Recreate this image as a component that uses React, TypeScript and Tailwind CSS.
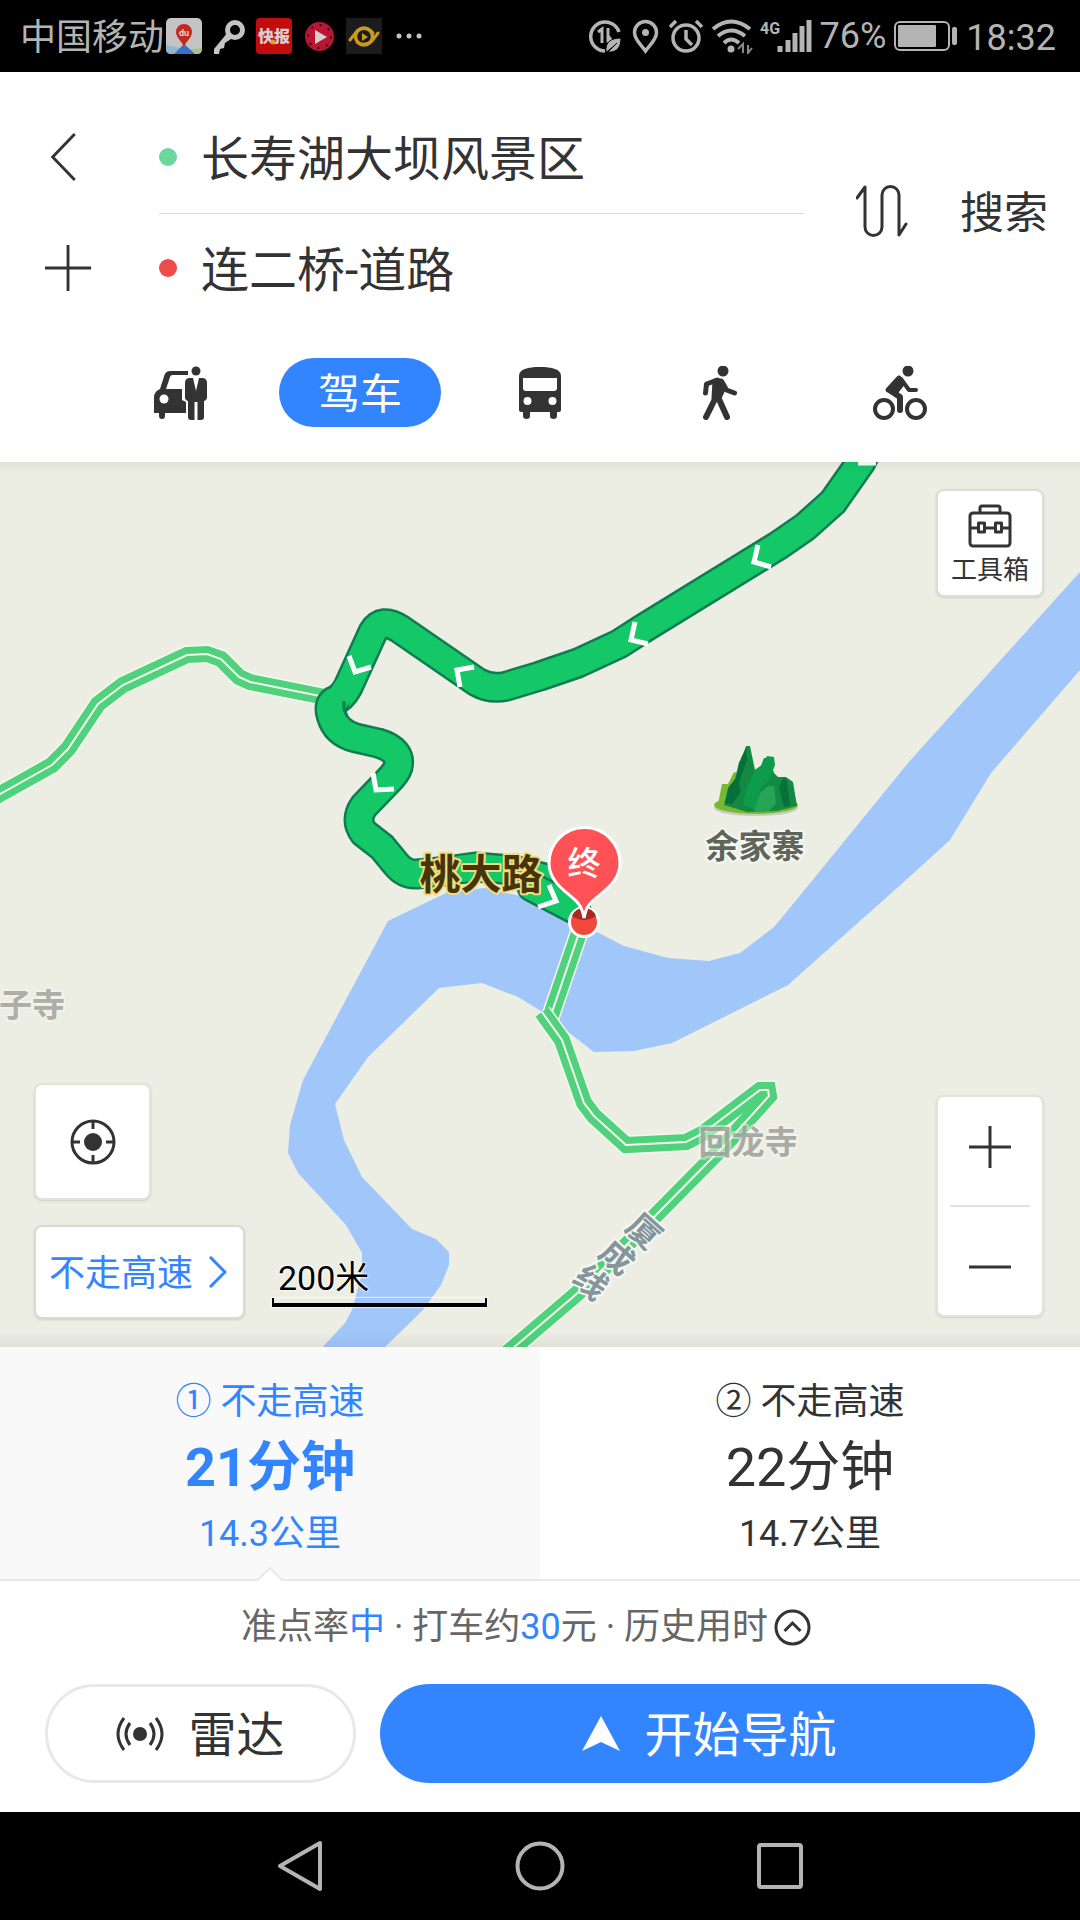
import React, { useState } from 'react';
import clsx from 'clsx';

type Mode = 'taxi' | 'drive' | 'bus' | 'walk' | 'bike';

const routes = [
  { id: 1, mark: '①', name: '不走高速', time: '21分钟', distance: '14.3公里' },
  { id: 2, mark: '②', name: '不走高速', time: '22分钟', distance: '14.7公里' },
];

const TaxiIcon = () => (
  <svg width="54" height="54" viewBox="0 0 54 54" fill="#333">
    <path d="M35 5H17q-4 0-5.500 4L7 23q-5 2-6 7v17h5v3q0 3 3 3t3-3v-3h21V36l-4-2V23H13l4-12q.5-2 2.500-2H35z" />
    <circle cx="11" cy="33" r="4.500" fill="#fff" />
    <circle cx="43" cy="5" r="4.500" />
    <path d="M37 12h3l3 13 3-13h3q5 0 5 5v14q0 3-3 4v16q0 3-3 3h-3.500V36h-3v18H38q-3 0-3-3V35q-3-1-3-4V17q0-5 5-5z" />
  </svg>
);

const BusIcon = () => (
  <svg width="44" height="54" viewBox="0 0 44 54" fill="#333">
    <path
      fillRule="evenodd"
      d="M22 1c12 0 21 2 21 9v34q0 2-2 2h-2v4q0 3-3.500 3T32 50v-4H12v4q0 3-3.500 3T5 50v-4H3q-2 0-2-2V10c0-7 9-9 21-9zM5 12v10q0 3 3 3h28q3 0 3-3V12zM9.500 31a4 4 0 100 8 4 4 0 000-8zm25 0a4 4 0 100 8 4 4 0 000-8z"
    />
  </svg>
);

const WalkIcon = () => (
  <svg width="36" height="54" viewBox="0 0 36 54" fill="none" stroke="#333" strokeWidth="5" strokeLinecap="round" strokeLinejoin="round">
    <circle cx="21" cy="5" r="5.500" fill="#333" stroke="none" />
    <path d="M13 15h6l3 6-5 11h-5z" fill="#333" />
    <path d="M3.500 27l1-9 11-4M20 16l4.500 8 8 3" />
    <path d="M14 31L4 51M16 31l9 20" strokeWidth="6" />
  </svg>
);

const BikeIcon = () => (
  <svg width="54" height="54" viewBox="0 0 54 54" fill="none" stroke="#333" strokeLinecap="round" strokeLinejoin="round">
    <circle cx="35" cy="5" r="5.500" fill="#333" stroke="none" />
    <circle cx="11" cy="43" r="9" strokeWidth="4" />
    <circle cx="43" cy="43" r="9" strokeWidth="4" />
    <path d="M26 12l-11 12 7 3 7-9z" fill="#333" strokeWidth="5" />
    <path d="M28 13l8 11h7" strokeWidth="4" />
    <path d="M18 25l9 6v13" strokeWidth="6" />
  </svg>
);

const modes: { id: Mode; label: string; icon?: React.ReactNode }[] = [
  { id: 'taxi', label: '打车', icon: <TaxiIcon /> },
  { id: 'drive', label: '驾车' },
  { id: 'bus', label: '公交', icon: <BusIcon /> },
  { id: 'walk', label: '步行', icon: <WalkIcon /> },
  { id: 'bike', label: '骑行', icon: <BikeIcon /> },
];

const StatusBar = () => (
  <div className="flex h-[72px] items-center justify-between bg-black pl-5 pr-6 text-4xl text-[#b4b4b4]">
    <div className="flex items-center">
      <span className="pt-1">中国移动</span>
      <svg className="ml-0.5" width="260" height="36" viewBox="0 0 260 36">
        <rect width="36" height="36" rx="5" fill="#c4c4c4" />
        <path d="M0 27l14 3v6H5q-5 0-5-5z" fill="#8fb8c8" />
        <path d="M36 30l-12 1 2 5h5q5 0 5-5z" fill="#a9c08a" />
        <path d="M18 26l11 10H8z" fill="#3572c8" />
        <path d="M18 29c-2-6-8-9-8-15a8 8 0 0116 0c0 6-6 9-8 15z" fill="#c4281f" />
        <text x="18" y="18" fontSize="9" fontWeight="700" fill="#ddd" textAnchor="middle">du</text>
        <circle cx="69" cy="12" r="7.500" fill="none" stroke="#c4c4c4" strokeWidth="5" />
        <path d="M62 14L48 31v5h5l1-5 4-1 1-5 9-6" fill="#c4c4c4" />
        <rect x="90" width="36" height="36" rx="4" fill="#c30d0d" />
        <text x="108" y="24" fontSize="16" fontWeight="900" fill="#d8d0d0" textAnchor="middle">快报</text>
        <circle cx="107" cy="24" r="2.500" fill="#e0a020" />
        <circle cx="153.500" cy="18.500" r="14.500" fill="#b81632" />
        <circle cx="153.500" cy="18.500" r="11.500" fill="none" stroke="#3a0812" strokeWidth="2" strokeDasharray="2 7" />
        <path d="M149 12l12 7-12 7z" fill="#d8d0d0" />
        <rect x="180" width="36" height="36" fill="#1c1c1c" />
        <path d="M184 22l7-9q7-5 14 0l2 2M212 15l-6 8q-8 6-15 1" fill="none" stroke="#c99a1c" strokeWidth="3" strokeLinecap="round" />
        <circle cx="198" cy="18.500" r="8.500" fill="none" stroke="#c99a1c" strokeWidth="3.500" />
        <path d="M196 15l6 4-6 4z" fill="#c99a1c" />
        <g fill="#c4c4c4">
          <circle cx="233" cy="18" r="2.500" />
          <circle cx="243" cy="18" r="2.500" />
          <circle cx="253" cy="18" r="2.500" />
        </g>
      </svg>
    </div>
    <div className="flex items-center">
      <svg width="232" height="36" viewBox="0 0 232 36" fill="none" stroke="#b4b4b4" strokeWidth="3.500">
        <path d="M17 33A14.500 14.500 0 1131 14" />
        <path d="M10 14l4-3v14M20 10v13h4l-4-5" strokeWidth="3" />
        <path d="M18 34c-1-10 5-14 15-14 0 9-4 15-13 14l9-9" fill="#b4b4b4" stroke="#000" strokeWidth="1" />
        <path d="M57.500 33c-4-6-11-11-11-18.500a11 11 0 0122 0c0 7.500-7 12.500-11 18.500z" />
        <circle cx="57.500" cy="14.500" r="3.500" fill="#b4b4b4" stroke="none" />
        <circle cx="98" cy="20" r="13" />
        <path d="M98 12v9l6 6M82 9l6-6M114 9l-6-6" />
        <path d="M125 11q18-15 37 0M130 18q13-11 27 0M136 25q7-7 15 0" strokeWidth="4" />
        <circle cx="143" cy="31" r="3.500" fill="#b4b4b4" stroke="none" />
        <path d="M150 31l5-5v9M160 27v8l4-5" strokeWidth="2" stroke="#888" />
        <text x="172" y="16" fontSize="16" fontWeight="700" fill="#b4b4b4" stroke="none">4G</text>
        <path d="M192 34v-6M200 34V22M207 34V15M214 34V8M221 34V2" strokeWidth="5" />
      </svg>
      <span>76%</span>
      <svg className="ml-2 mr-2" width="64" height="30" viewBox="0 0 64 30" fill="none">
        <rect x="1" y="1" width="54" height="28" rx="5" stroke="#b4b4b4" strokeWidth="2" />
        <rect x="4" y="4" width="38" height="22" rx="1" fill="#b4b4b4" />
        <rect x="58" y="6" width="5" height="18" rx="2" fill="#b4b4b4" />
      </svg>
      <span className="pt-1">18:32</span>
    </div>
  </div>
);

const SearchHeader = () => {
  const [mode, setMode] = useState<Mode>('drive');

  return (
    <header className="bg-white pt-7 text-[#333]">
      <div className="flex">
        <div className="flex w-[159px] flex-col pl-[45px]">
          <button type="button" aria-label="返回" className="flex h-[114px] w-12 items-center">
            <svg width="50" height="50" viewBox="0 0 50 50" fill="none" stroke="#333" strokeWidth="3">
              <path d="M31 1L8 25l23 24" />
            </svg>
          </button>
          <button type="button" aria-label="添加途经点" className="flex h-[108px] w-12 items-center">
            <svg width="50" height="50" viewBox="0 0 50 50" fill="none" stroke="#333" strokeWidth="3">
              <path d="M24 1v48M0 25h48" />
            </svg>
          </button>
        </div>
        <div className="flex-1">
          <label className="flex h-[114px] items-center gap-6 border-b border-[#dcdcdc]">
            <span className="size-[18px] shrink-0 rounded-full bg-[#6bd79c]" />
            <input aria-label="起点" defaultValue="长寿湖大坝风景区" className="w-full min-w-0 pb-1 text-5xl outline-none" />
          </label>
          <label className="flex h-[108px] items-center gap-6">
            <span className="size-[18px] shrink-0 rounded-full bg-[#f04b4b]" />
            <input aria-label="终点" defaultValue="连二桥-道路" className="w-full min-w-0 pb-1 text-5xl outline-none" />
          </label>
        </div>
        <div className="flex w-[276px] items-center justify-between pl-[52px] pr-8">
          <button type="button" aria-label="交换起终点">
            <svg width="52" height="54" viewBox="0 0 52 54" fill="none" stroke="#333" strokeWidth="3" strokeLinecap="round" strokeLinejoin="round">
              <path d="M1 14l8-11v40a8.500 8.500 0 0017 0V11a8.500 8.500 0 0117 0v40l7-11" />
            </svg>
          </button>
          <button type="button" className="pt-1.5 text-[44px] leading-none">搜索</button>
        </div>
      </div>
      <nav className="grid grid-cols-5 px-[90px] pb-[35px] pt-9">
        {modes.map((m) => (
          <button
            key={m.id}
            type="button"
            aria-label={m.label}
            onClick={() => setMode(m.id)}
            className={clsx(
              'mx-auto flex h-[69px] w-[162px] items-center justify-center rounded-full text-[42px] leading-none',
              mode === m.id && 'bg-[#3385ff] text-white'
            )}
          >
            {m.icon ?? <span className="pt-1">{m.label}</span>}
          </button>
        ))}
      </nav>
    </header>
  );
};

// two lanes on a white bed, with a thin white line between them
const Road = ({ d }: { d: string }) => (
  <g fill="none" strokeLinejoin="miter">
    <path d={d} stroke="#f4f8ef" strokeWidth="19" />
    <path d={d} stroke="#50d27d" strokeWidth="16" />
    <path d={d} stroke="#f4f8ef" strokeWidth="2" />
  </g>
);

const RouteLine = ({ d }: { d: string }) => (
  <g fill="none" strokeLinejoin="round" strokeLinecap="round">
    <path d={d} stroke="#0f7b50" strokeWidth="31" />
    <path d={d} stroke="#14c868" strokeWidth="26" />
  </g>
);

const MapCanvas = () => (
  <svg
    className="absolute inset-0 h-full w-full"
    viewBox="0 462 1080 885"
    preserveAspectRatio="xMidYMid slice"
    role="img"
    aria-label="路线地图"
  >
    <rect y="462" width="1080" height="885" fill="#eceee4" />
    <path
      fill="#a1c6f9"
      d="M1080 572L908 763L798 898L774 927L740 953L709 961L668 958L624 946L597 932L560 905L484 888L446 893L388 921L303 1080L290 1125L288 1153L298 1173L346 1225L362 1253V1273L352 1310L345 1323L320 1350H382L423 1310L441 1285L449 1265V1252L436 1239L412 1229L362 1177L344 1140L335 1104L368 1057L439 988L482 983L518 997L541 1011L572 1035L594 1052L634 1051L672 1043L788 985L906 880L950 840L991 773L1080 670Z"
    />
    <Road d="M-5 797L52 765L68 749L98 704L123 685L187 655L207 654L221 659L239 677L250 682L325 697" />
    <Road d="M580 930L550 1018" />
    <Road d="M542 1012L562 1040L584 1103L594 1116L626 1145L686 1142L702 1134L760 1090L768 1090L769 1096L722 1148L656 1215L590 1282L573 1297L505 1355" />

    <RouteLine d="M866 452L861 462L833 502L805 527L779 545L644 628L619 644L578 663L540 676L507 686Q491 690 477 682L400 629Q382 617 373 632L348 687Q342 698 334 701" />
    <RouteLine d="M334 701Q328 705 331 715Q336 733 356 738L378 743Q402 750 398 767Q396 773 388 781L364 806Q354 820 364 833L382 847L396 864Q405 875 417 874L439 872L475 867L514 870L560 882" />
    <RouteLine d="M532 887L576 910" />
    <path d="M336 702L345 688" fill="none" stroke="#14c868" strokeWidth="23" strokeLinecap="round" />
    <path d="M344 701v8l3 7" fill="none" stroke="#0f7b50" strokeWidth="3" />

    <g fill="none" stroke="#fff" strokeWidth="5">
      <path d="M858 463l18 0" />
      <path d="M758 545l-4 17 17 5" />
      <path d="M635 622l-4 18 17 4" />
      <path d="M474 667l-17 3 3 17" />
      <path d="M349 656l6 16 16-5" />
      <path d="M373 773l3 17 18-1" />
      <path d="M549 885l7 16-18 6" />
    </g>

    {/* 余家寨 */}
    <g>
      <ellipse cx="756" cy="808" rx="42" ry="8" fill="#c9cbbf" />
      <ellipse cx="756" cy="805" rx="42" ry="9" fill="#79b832" />
      <path d="M718 804l4-20h6l6-12 8 2v34z" fill="#79b832" />
      <path d="M724 805l4-17 7-9 4-17 3-4 4-12h4l5 24 6-4 3-8h5l5 15 4 4h8l7 5 4 24-20 5-30 1z" fill="#138a42" />
      <path d="M746 748l1 12-8 22 2 10-9 12-7-1 4-16 7-9 5-20z" fill="#05703a" />
      <path d="M755 770l-8 17-4 17 12 6 5-20 9-10 6-15-1-8-7-1-4 8z" fill="#0c9c4b" />
      <path d="M768 786l-8 7-6 18h15l7-8-2-17z" fill="#28a456" />
      <path d="M784 777l-5 10 5 20 6-2-3-24z" fill="#0a6f38" />
    </g>

    <g fontWeight="700" fontSize="33" textAnchor="middle" stroke="#f6f7f0" strokeWidth="4" strokeLinejoin="round" paintOrder="stroke">
      <text x="755" y="858" fill="#5f655a">余家寨</text>
      <g fill="#9c9e98" strokeOpacity=".5">
        <text x="748" y="1154" fillOpacity=".85">回龙寺</text>
        <text x="32" y="1017" fill="#acaea7">子寺</text>
      </g>
      <g fill="#84969b">
        <text x="0" y="12" transform="translate(644 1231) rotate(42)">厦</text>
        <text x="0" y="12" transform="translate(617 1257) rotate(42)">成</text>
        <text x="0" y="12" transform="translate(591 1282) rotate(42)">线</text>
      </g>
    </g>
    <text x="481" y="889" fontSize="41" fontWeight="700" textAnchor="middle" fill="#46340a" stroke="#f3dc7c" strokeWidth="4" strokeLinejoin="round" paintOrder="stroke">
      桃大路
    </text>

    <circle cx="584" cy="922" r="14.500" fill="#f2483b" stroke="#fff" strokeWidth="3" />
    <path d="M572 916a13 13 0 0124 0q-12 8-24 0z" fill="#a62a22" />
    <path d="M584 918q-2-13-10-19c-10-9-25-18-25-36a35.500 35.500 0 0171 0c0 18-15 27-25 36q-9 6-11 19z" fill="#ff5156" stroke="#fff" strokeWidth="3" />
    <text x="584" y="875" fontSize="33" fontWeight="500" textAnchor="middle" fill="#fff">终</text>
  </svg>
);

const MapControls = () => (
  <div className="absolute inset-0 flex items-end justify-between pl-[34px] pr-9 text-[#333]">
    <div className="flex items-end gap-[27px] pb-7">
      <div className="flex flex-col gap-[25px]">
        <button type="button" aria-label="定位" className="flex size-[117px] items-center justify-center rounded-lg border-2 border-[#e2e3dc] bg-white shadow-sm">
          <svg width="46" height="46" viewBox="0 0 46 46" fill="none" stroke="#333" strokeWidth="3">
            <circle cx="23" cy="23" r="21" />
            <circle cx="23" cy="23" r="9" fill="#333" stroke="none" />
            <path d="M23 2v8M23 36v8M2 23h8M36 23h8" />
          </svg>
        </button>
        <button type="button" className="flex h-[94px] w-[211px] items-center gap-4 whitespace-nowrap rounded-lg border-2 border-[#d9dad3] bg-white pl-[13px] text-4xl text-[#3385ff] shadow-sm">
          <span className="pt-1">不走高速</span>
          <svg width="18" height="32" viewBox="0 0 18 32" fill="none" stroke="#3385ff" strokeWidth="3">
            <path d="M1 1l15 15L1 31" />
          </svg>
        </button>
      </div>
      <div className="pb-3 text-black">
        <div className="pl-[6px] text-[34px] leading-10 [text-shadow:0_0_2px_#fff,0_0_2px_#fff,0_0_3px_#fff]">200米</div>
        <div className="h-[9px] w-[215px] border-x-2 border-b-4 border-black shadow-[0_0_1px_1px_#ffffff99]" />
      </div>
    </div>
    <div className="flex h-full flex-col justify-between pb-[30px] pt-[27px]">
      <button type="button" className="flex size-[108px] flex-col items-center justify-center gap-1 rounded-lg border-2 border-[#dcddd6] bg-white pt-1.5 text-[26px] leading-9 shadow-sm">
        <svg width="44" height="44" viewBox="0 0 44 44" fill="none" stroke="#333" strokeWidth="3" strokeLinejoin="round">
          <path d="M12 9V4q0-2 2-2h16q2 0 2 2v5" />
          <rect x="2" y="9" width="40" height="33" rx="3" />
          <path d="M2 24h8M17 24h10M34 24h8" />
          <rect x="10.500" y="19" width="6" height="9" />
          <rect x="27.500" y="19" width="6" height="9" />
        </svg>
        工具箱
      </button>
      <div className="flex w-[108px] flex-col rounded-lg border-2 border-[#e2e3dc] bg-white px-3 shadow-sm">
        <button type="button" aria-label="放大" className="flex h-[110px] items-center justify-center border-b-2 border-[#e0e0e0] pb-2">
          <svg width="42" height="42" viewBox="0 0 42 42" stroke="#333" strokeWidth="3">
            <path d="M21 0v42M0 21h42" />
          </svg>
        </button>
        <button type="button" aria-label="缩小" className="flex h-[108px] items-center justify-center pt-3">
          <svg width="42" height="42" viewBox="0 0 42 42" stroke="#333" strokeWidth="3">
            <path d="M0 21h42" />
          </svg>
        </button>
      </div>
    </div>
  </div>
);

const RoutePanel = () => {
  const [selected, setSelected] = useState(1);

  return (
    <section className="bg-white text-[#333]">
      <div className="grid grid-cols-2 border-b-2 border-[#e9e9e9]">
        {routes.map((route) => {
          const active = route.id === selected;
          return (
            <button
              key={route.id}
              type="button"
              onClick={() => setSelected(route.id)}
              className={clsx('relative pb-3 pt-[22px] text-4xl', active && 'bg-[#f9f9f9] text-[#3385ff]')}
            >
              <div className="leading-[66px]">{route.mark} {route.name}</div>
              <div className={clsx('text-[54px] leading-[66px]', active && 'font-bold')}>{route.time}</div>
              <div className="leading-[66px]">{route.distance}</div>
              {active && (
                <svg className="absolute -bottom-0.5 left-1/2 -translate-x-1/2" width="26" height="14" viewBox="0 0 26 14">
                  <path d="M0 14L13 1l13 13" fill="#fff" stroke="#e9e9e9" strokeWidth="2" />
                </svg>
              )}
            </button>
          );
        })}
      </div>
      <div className="flex h-[88px] items-center justify-center gap-[6px] pr-7 pt-1 text-4xl text-[#666]">
        <p>
          准点率<span className="text-[#3385ff]">中</span> · 打车约<span className="text-[#3385ff]">30</span>元 · 历史用时
        </p>
        <button type="button" aria-label="展开">
          <svg width="37" height="37" viewBox="0 0 37 37" fill="none" stroke="#333" strokeWidth="3">
            <circle cx="18.500" cy="18.500" r="16.500" />
            <path d="M10.500 22l8-8 8 8" />
          </svg>
        </button>
      </div>
      <div className="flex gap-6 px-[45px] pb-[29px] pt-[15px] text-5xl">
        <button type="button" className="flex h-[99px] w-[311px] items-center justify-center gap-6 rounded-full border-[3px] border-[#e8e8e8]">
          <svg width="48" height="36" viewBox="0 0 48 36" fill="none" stroke="#333" strokeWidth="3">
            <circle cx="24" cy="18" r="7" fill="#333" stroke="none" />
            <path d="M14 7q-8 11 0 22M34 7q8 11 0 22M8 2q-12 16 0 32M40 2q12 16 0 32" />
          </svg>
          <span className="pt-1">雷达</span>
        </button>
        <button type="button" className="flex h-[99px] flex-1 items-center justify-center gap-6 rounded-full bg-[#3385ff] pl-1 text-white">
          <svg width="38" height="36" viewBox="0 0 38 36" fill="#fff">
            <path d="M19 0l19 35-19-9-19 9z" />
          </svg>
          <span className="pt-1">开始导航</span>
        </button>
      </div>
    </section>
  );
};

const SystemNav = () => (
  <div className="flex h-[108px] justify-center bg-black">
    <button type="button" aria-label="后退" className="flex w-60 items-center justify-center">
      <svg width="46" height="52" viewBox="0 0 46 52" fill="none" stroke="#b4b4b4" strokeWidth="4" strokeLinejoin="round">
        <path d="M43 3v46L3 26z" />
      </svg>
    </button>
    <button type="button" aria-label="主页" className="flex w-60 items-center justify-center">
      <svg width="50" height="50" viewBox="0 0 50 50" fill="none" stroke="#b4b4b4" strokeWidth="4">
        <circle cx="25" cy="25" r="22.500" />
      </svg>
    </button>
    <button type="button" aria-label="最近任务" className="flex w-60 items-center justify-center">
      <svg width="46" height="46" viewBox="0 0 46 46" fill="none" stroke="#b4b4b4" strokeWidth="4">
        <rect x="2" y="2" width="42" height="42" rx="2" />
      </svg>
    </button>
  </div>
);

export default function App() {
  return (
    <div className="flex min-h-screen flex-col bg-white font-['Roboto','Noto_Sans_CJK_SC',sans-serif]">
      <StatusBar />
      <SearchHeader />
      <main className="relative min-h-[600px] flex-1 overflow-hidden">
        <MapCanvas />
        <div className="absolute inset-x-0 top-0 h-3 bg-linear-to-b from-black/5 to-transparent" />
        <div className="absolute inset-x-0 bottom-0 h-4 bg-linear-to-t from-black/5 to-transparent" />
        <MapControls />
      </main>
      <RoutePanel />
      <SystemNav />
    </div>
  );
}
